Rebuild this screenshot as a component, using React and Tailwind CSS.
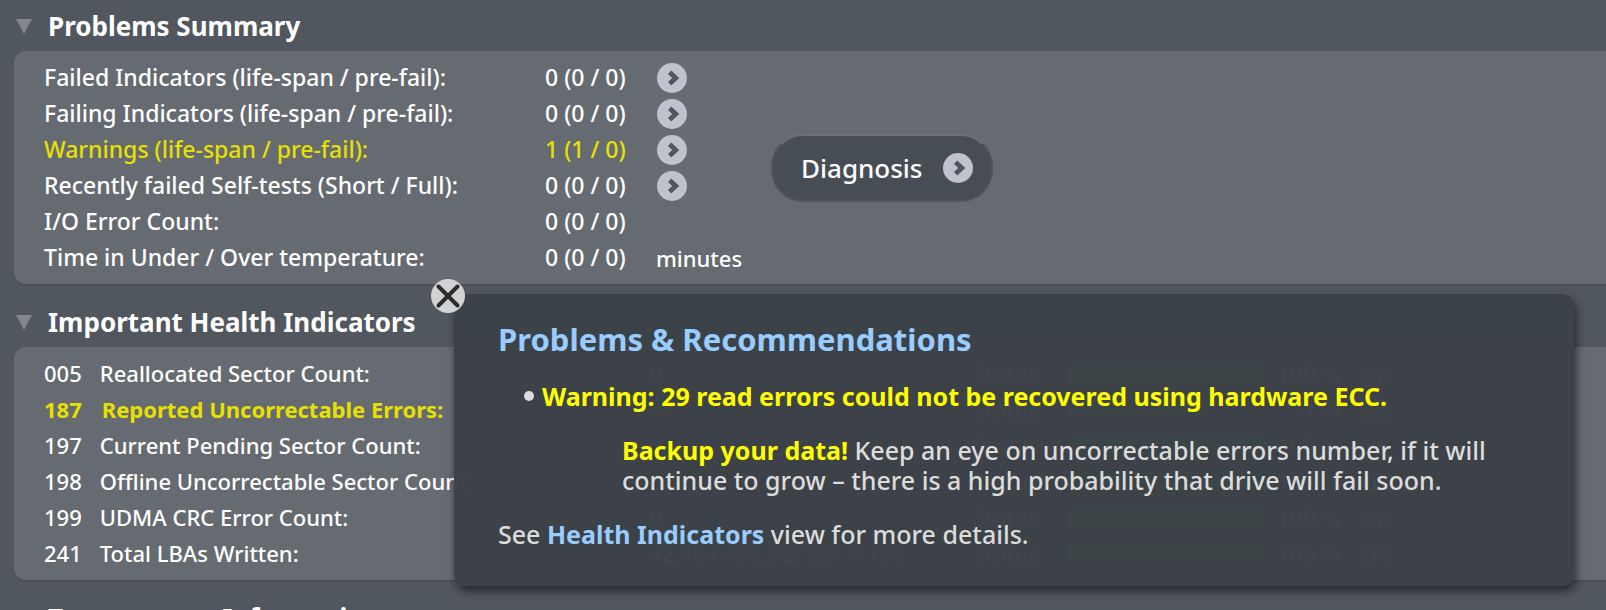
import { useState } from 'react';

const problems = [
  { label: 'Failed Indicators (life-span / pre-fail):', value: '0 (0 / 0)', link: true },
  { label: 'Failing Indicators (life-span / pre-fail):', value: '0 (0 / 0)', link: true },
  { label: 'Warnings (life-span / pre-fail):', value: '1 (1 / 0)', link: true, warn: true },
  { label: 'Recently failed Self-tests (Short / Full):', value: '0 (0 / 0)', link: true },
  { label: 'I/O Error Count:', value: '0 (0 / 0)' },
  { label: 'Time in Under / Over temperature:', value: '0 (0 / 0)', unit: 'minutes' },
];

const indicators = [
  { id: '005', name: 'Reallocated Sector Count:', value: '0', percent: 100 },
  { id: '187', name: 'Reported Uncorrectable Errors:', value: '29', percent: 71, warn: true },
  { id: '197', name: 'Current Pending Sector Count:', value: '0', percent: 100 },
  { id: '198', name: 'Offline Uncorrectable Sector Count:', value: '0', percent: 100 },
  { id: '199', name: 'UDMA CRC Error Count:', value: '0', percent: 100 },
  { id: '241', name: 'Total LBAs Written:', value: '42,464,485,522 (21.7 TB)', percent: 100 },
];

function ArrowIcon() {
  return (
    <svg className="w-[30px] h-[30px] block" viewBox="0 0 30 30">
      <circle cx="15" cy="15" r="15" fill="#c0c3cd" />
      <path d="M12.6 9.2L18.8 15l-6.2 5.8" fill="none" stroke="#51575f" strokeWidth="4.8" />
    </svg>
  );
}

function Section({ title, children }) {
  const [open, setOpen] = useState(true);

  return (
    <section className="mb-3">
      <h2 className="h-[51px] pl-4">
        <button
          onClick={() => setOpen(!open)}
          aria-expanded={open}
          className="h-full flex items-center text-[26px] leading-8 font-bold whitespace-nowrap"
        >
          <svg className={`w-4 h-4 mr-4 ${open ? '' : '-rotate-90'}`} viewBox="0 0 16 16">
            <path d="M0 1h16L8 16z" fill="#81868d" />
          </svg>
          {title}
        </button>
      </h2>
      {open && children}
    </section>
  );
}

function Panel({ children }) {
  return (
    <div className="ml-3.5 pl-[30px] pt-[9px] pb-2 rounded-l-xl bg-[#656b71] shadow-[0_2px_0_#4b5054] flex items-center">
      {children}
    </div>
  );
}

function Popup({ onClose }) {
  return (
    <div
      role="dialog"
      aria-labelledby="popup-title"
      className="absolute left-[454px] right-8 top-[294px] h-[292px] pl-11 pr-12 pt-[27px] rounded-xl bg-[#3b4147]/98 text-[#dcdcdc] text-[25px] leading-[30px] shadow-[2px_5px_10px_rgba(0,0,0,0.55)]"
    >
      <button onClick={onClose} aria-label="Close" className="absolute -left-[23px] -top-[15px]">
        <svg className="w-[34px] h-[34px] block" viewBox="0 0 34 34">
          <circle cx="17" cy="17" r="17" fill="#d2d2d2" />
          <path d="M7.5 7.5l19 19M26.5 7.5l-19 19" stroke="#2b2b2b" strokeWidth="4" strokeLinecap="round" />
        </svg>
      </button>
      <h3 id="popup-title" className="text-[31px] leading-9 font-bold text-[#99ccff]">
        Problems &amp; Recommendations
      </h3>
      <ul className="mt-6">
        <li>
          <div className="flex items-center pl-[26px]">
            <span className="w-2.5 h-2.5 mr-2 rounded-full bg-[#dcdcdc]" />
            <strong className="text-[#ffff00]">
              Warning: 29 read errors could not be recovered using hardware ECC.
            </strong>
          </div>
          <p className="mt-6 ml-[124px]">
            <strong className="text-[#ffff00]">Backup your data!</strong> Keep an eye on uncorrectable errors
            number, if it will continue to grow – there is a high probability that drive will fail soon.
          </p>
        </li>
      </ul>
      <p className="mt-6">
        See <a href="#health" className="font-bold text-[#99ccff]">Health Indicators</a> view for more details.
      </p>
    </div>
  );
}

export default function App() {
  const [popup, setPopup] = useState(true);

  return (
    <main className="relative h-screen overflow-hidden bg-[#51575e] text-white text-[22px] leading-7 font-medium font-['Noto_Sans','Open_Sans',sans-serif]">
      <Section title="Problems Summary">
        <Panel>
          <table className="table-fixed w-[727px] shrink-0">
            <tbody>
              {problems.map((row) => (
                <tr key={row.label} className={`h-9 ${row.warn ? 'text-[#e8e000]' : ''}`}>
                  <th scope="row" className="w-[501px] p-0 pb-0.5 text-left text-[23px] font-medium">{row.label}</th>
                  <td className="w-[111px] p-0 pb-0.5 text-[23px] whitespace-nowrap">{row.value}</td>
                  <td className="p-0">
                    {row.link && (
                      <button aria-label={`Show ${row.label}`} className="block ml-px">
                        <ArrowIcon />
                      </button>
                    )}
                    {row.unit}
                  </td>
                </tr>
              ))}
            </tbody>
          </table>
          <button
            onClick={() => setPopup(true)}
            className="h-[68px] pl-7 pr-[18px] flex items-center gap-5 rounded-[32px] bg-[#474d54] border-2 border-[#4f555a] border-t-[#6c7078] text-[26px]"
          >
            Diagnosis
            <ArrowIcon />
          </button>
        </Panel>
      </Section>

      <Section title="Important Health Indicators">
        <Panel>
          <table className="table-fixed w-[1400px] shrink-0" id="health">
            <tbody>
              {indicators.map((row) => (
                <tr key={row.id} className={`h-9 whitespace-nowrap ${row.warn ? 'text-[#e8e000]' : ''}`}>
                  <th scope="row" className={`w-[605px] p-0 pb-0.5 text-left ${row.warn ? 'font-bold' : 'font-medium'}`}>
                    <span className={row.warn ? 'mr-5' : 'mr-[18px]'}>{row.id}</span>
                    {row.name}
                  </th>
                  <td className={`w-[324px] p-0 pb-0.5 ${row.warn ? 'font-bold' : ''}`}>{row.value}</td>
                  <td className="w-[94px] p-0 pb-0.5 text-white">Status:</td>
                  <td className="w-[200px] p-0">
                    <div
                      className="h-[22px] bg-linear-to-b from-[#30ff30] to-[#60a030]"
                      style={{ width: `${row.percent}%` }}
                    />
                  </td>
                  <td className="w-[73px] p-0 pb-0.5 text-right text-white">{row.percent} %</td>
                  <td className="p-0 pl-5">
                    {row.warn ? (
                      <span className="w-[30px] h-[30px] flex items-center justify-center rounded-full bg-[#c0c3cd] text-[#51575f] font-bold">!</span>
                    ) : 'OK'}
                  </td>
                </tr>
              ))}
            </tbody>
          </table>
        </Panel>
      </Section>

      <Section title="Temperature Information" />

      {popup && <Popup onClose={() => setPopup(false)} />}
    </main>
  );
}
